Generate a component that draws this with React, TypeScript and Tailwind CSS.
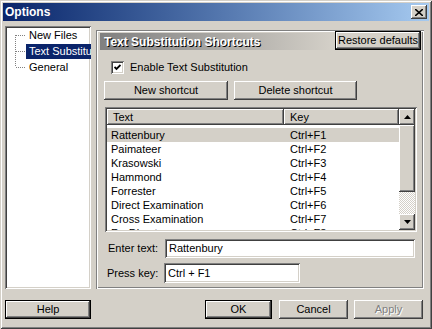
const raised =
  "shadow-[inset_-1px_-1px_#404040,inset_1px_1px_#ffffff,inset_-2px_-2px_#808080,inset_2px_2px_#d4d0c8]";
const sunken =
  "shadow-[inset_1px_1px_#808080,inset_-1px_-1px_#ffffff,inset_2px_2px_#404040,inset_-2px_-2px_#d4d0c8]";
const framed =
  "border border-black shadow-[inset_-1px_-1px_#404040,inset_1px_1px_#ffffff,inset_-2px_-2px_#808080]";

const rows = [
  ["Rattenbury", "Ctrl+F1"],
  ["Paimateer", "Ctrl+F2"],
  ["Krasowski", "Ctrl+F3"],
  ["Hammond", "Ctrl+F4"],
  ["Forrester", "Ctrl+F5"],
  ["Direct Examination", "Ctrl+F6"],
  ["Cross Examination", "Ctrl+F7"],
  ["Re-Direct", "Ctrl+F8"],
];

function TreeLine({ pos }: { pos: "first" | "mid" | "last" }) {
  return (
    <svg width="21" height="16" viewBox="0 0 21 16" className="shrink-0">
      <line
        x1="10.5"
        y1={pos === "first" ? 8 : 0}
        x2="10.5"
        y2={pos === "last" ? 8 : 16}
        stroke="#808080"
        strokeDasharray="1 1"
      />
      <line x1="11" y1="8.5" x2="21" y2="8.5" stroke="#808080" strokeDasharray="1 1" />
    </svg>
  );
}

function Arrow({ up }: { up?: boolean }) {
  return (
    <svg width="7" height="4" viewBox="0 0 7 4">
      <polygon points={up ? "3.5,0 7,4 0,4" : "0,0 7,0 3.5,4"} fill="#000" />
    </svg>
  );
}

export default function App() {
  return (
    <div className="w-[432px] h-[329px] bg-[#d4d0c8] p-[3px] font-['Liberation_Sans',Arial,sans-serif] text-[11px] text-black leading-none shadow-[inset_1px_1px_#d4d0c8,inset_-1px_-1px_#404040,inset_2px_2px_#ffffff,inset_-2px_-2px_#808080] overflow-hidden">
      {/* Title bar */}
      <div className="h-[18px] flex items-center bg-gradient-to-r from-[#0a246a] to-[#a6caf0] pl-[2px] pr-[2px]">
        <span className="font-bold text-white text-[12px]">Options</span>
        <div className={`ml-auto w-[16px] h-[14px] bg-[#d4d0c8] flex items-center justify-center ${raised}`}>
          <svg width="8" height="7" viewBox="0 0 8 7">
            <path d="M0 0L8 7M8 0L0 7" stroke="#000" strokeWidth="1.6" />
          </svg>
        </div>
      </div>

      <div className="px-[2px]">
        <div className="mt-[5px] flex items-start">
          {/* Tree */}
          <div className={`w-[86px] h-[263px] bg-white pt-[1px] pl-[0px] overflow-hidden ${sunken}`}>
            <div className="flex items-center h-[16px]">
              <TreeLine pos="first" />
              <span className="pl-[3px]">New Files</span>
            </div>
            <div className="flex items-center h-[16px]">
              <TreeLine pos="mid" />
              <span className="bg-[#0a246a] text-white pl-[3px] h-[15px] flex items-center whitespace-nowrap pr-[4px]">
                Text Substitution
              </span>
            </div>
            <div className="flex items-center h-[16px]">
              <TreeLine pos="last" />
              <span className="pl-[3px]">General</span>
            </div>
          </div>

          {/* Right panel */}
          <div className="ml-[5px] mt-[4px] w-[328px] h-[259px] flex flex-col shadow-[inset_1px_1px_#808080,inset_-1px_-1px_#ffffff,inset_2px_2px_#ffffff,inset_-2px_-2px_#808080]">
            <div className="pt-[1px] flex items-start">
              <div className="ml-[4px] mt-[2px] w-[233px] h-[17px] bg-gradient-to-r from-[#808080] to-[#d4d0c8] flex items-center pl-[4px]">
                <span className="font-bold text-white text-[12px] [text-shadow:1px_1px_0_#000] whitespace-nowrap">
                  Text Substitution Shortcuts
                </span>
              </div>
              <div className={`ml-[2px] w-[86px] h-[19px] flex items-center justify-center ${framed}`}>
                Restore defaults
              </div>
            </div>

            <div className="mt-[11px] pl-[15px] h-[13px] flex items-center">
              <div className={`w-[13px] h-[13px] bg-white flex items-center justify-center ${sunken}`}>
                <svg width="7" height="7" viewBox="0 0 7 7">
                  <path d="M0.5 3L2.5 5L6.5 1" stroke="#000" strokeWidth="1.8" fill="none" />
                </svg>
              </div>
              <span className="ml-[6px]">Enable Text Substitution</span>
            </div>

            <div className="mt-[7px] pl-[8px] flex gap-[6px]">
              <div className={`w-[124px] h-[19px] flex items-center justify-center ${raised}`}>New shortcut</div>
              <div className={`w-[123px] h-[19px] flex items-center justify-center ${raised}`}>Delete shortcut</div>
            </div>

            {/* List */}
            <div className={`mt-[7px] ml-[9px] w-[312px] h-[125px] bg-white p-[2px] flex ${sunken}`}>
              <div className="flex-1 flex flex-col overflow-hidden">
                <div className="flex h-[16px] shrink-0">
                  <div className={`w-[177px] flex items-center pl-[6px] bg-[#d4d0c8] ${raised}`}>Text</div>
                  <div className={`w-[115px] flex items-center pl-[6px] bg-[#d4d0c8] ${raised}`}>Key</div>
                </div>
                <div className="pt-[3px]">
                  {rows.map(([t, k], i) => (
                    <div key={t} className={`flex h-[14px] items-center ${i === 0 ? "bg-[#d4d0c8]" : ""}`}>
                      <div className="w-[177px] pl-[4px] whitespace-nowrap">{t}</div>
                      <div className="w-[115px] pl-[6px] whitespace-nowrap">{k}</div>
                    </div>
                  ))}
                </div>
              </div>
              <div className="w-[16px] flex flex-col">
                <div className={`h-[16px] bg-[#d4d0c8] flex items-center justify-center ${raised}`}>
                  <Arrow up />
                </div>
                <div className={`h-[67px] bg-[#d4d0c8] ${raised}`} />
                <div className="flex-1 [background:repeating-conic-gradient(#d4d0c8_0_25%,#ffffff_0_50%)_0_0/2px_2px]" />
                <div className={`h-[16px] bg-[#d4d0c8] flex items-center justify-center ${raised}`}>
                  <Arrow />
                </div>
              </div>
            </div>

            <div className="mt-[7px] h-[19px] flex items-center">
              <span className="pl-[12px] w-[69px]">Enter text:</span>
              <div className={`w-[250px] h-[19px] bg-white flex items-center pl-[4px] ${sunken}`}>Rattenbury</div>
            </div>
            <div className="mt-[5px] h-[20px] flex items-center">
              <span className="pl-[11px] w-[68px]">Press key:</span>
              <div className={`w-[136px] h-[20px] bg-white flex items-center pl-[4px] ${sunken}`}>Ctrl + F1</div>
            </div>
          </div>
        </div>

        {/* Bottom buttons */}
        <div className="mt-[11px] flex">
          <div className={`w-[86px] h-[19px] flex items-center justify-center ${framed}`}>Help</div>
          <div className={`ml-[114px] w-[67px] h-[19px] flex items-center justify-center ${framed}`}>OK</div>
          <div className={`ml-[7px] w-[69px] h-[19px] flex items-center justify-center ${raised}`}>Cancel</div>
          <div className={`ml-[6px] w-[69px] h-[19px] flex items-center justify-center text-[#808080] [text-shadow:1px_1px_0_#ffffff] ${raised}`}>
            Apply
          </div>
        </div>
      </div>
    </div>
  );
}
